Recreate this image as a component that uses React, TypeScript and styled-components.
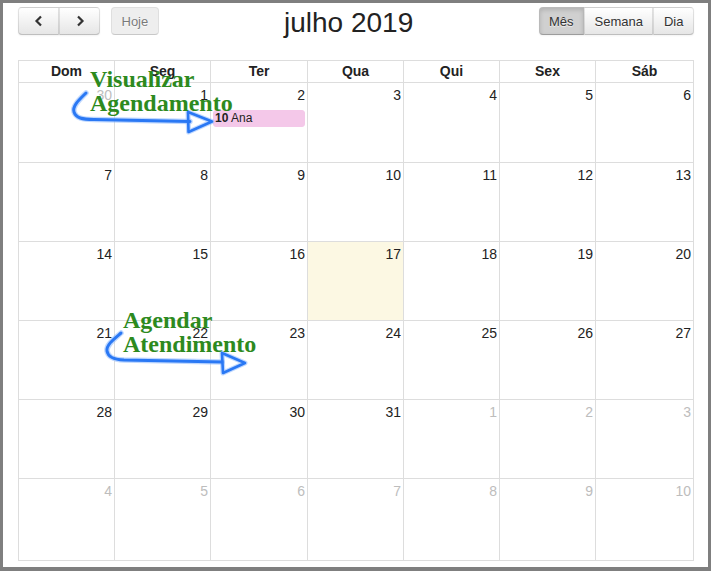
import React from "react";
import styled, { createGlobalStyle } from "styled-components";

const GlobalStyle = createGlobalStyle`
  html, body { margin: 0; padding: 0; background: #7f7f7f; }
  body { font-family: "Liberation Sans", Arial, sans-serif; color: #222; }
`;

const Page = styled.div`
  position: relative;
  padding: 3px 3px 4px 3px;
  width: 711px;
  height: 571px;
  box-sizing: border-box;
`;

const Frame = styled.div`
  width: 705px;
  height: 564px;
  box-sizing: border-box;
  background: #fff;
  padding: 4px 14px 0 15px;
`;

const Toolbar = styled.div`
  display: flex;
  align-items: flex-start;
  height: 53px;
`;

const Side = styled.div`
  display: flex;
  align-items: center;
  gap: 11px;
`;

const Center = styled.div`
  flex: 1;
  text-align: center;
`;

const Title = styled.h2`
  margin: 0;
  font-size: 28px;
  font-weight: normal;
  line-height: 32px;
  color: #222;
`;

const Group = styled.div`
  display: flex;
  & > * + * { margin-left: -1px; }
  & > *:not(:first-child) { border-top-left-radius: 0; border-bottom-left-radius: 0; }
  & > *:not(:last-child) { border-top-right-radius: 0; border-bottom-right-radius: 0; }
`;

const Button = styled.button<{ $active?: boolean; $w?: number }>`
  box-sizing: border-box;
  height: 28px;
  ${(p) => (p.$w ? `width: ${p.$w}px;` : "")}
  padding: 0 9.5px;
  margin: 0;
  display: flex;
  align-items: center;
  justify-content: center;
  font-family: "Liberation Sans", Arial, sans-serif;
  font-size: 13px;
  color: #333;
  border: 1px solid;
  border-color: rgba(0, 0, 0, 0.1) rgba(0, 0, 0, 0.1) rgba(0, 0, 0, 0.25);
  border-radius: 4px;
  text-shadow: 0 1px 1px rgba(255, 255, 255, 0.75);
  background-color: ${(p) => (p.$active ? "#d0d0d0" : "#f5f5f5")};
  background-image: ${(p) => (p.$active ? "none" : "linear-gradient(to bottom, #fff, #e6e6e6)")};
  box-shadow: ${(p) =>
    p.$active
      ? "inset 0 2px 4px rgba(0,0,0,.15), 0 1px 2px rgba(0,0,0,.05)"
      : "inset 0 1px 0 rgba(255,255,255,.2), 0 1px 2px rgba(0,0,0,.05)"};
  &:disabled {
    background-color: #e6e6e6;
    background-image: none;
    opacity: 0.65;
    box-shadow: none;
  }
`;

const columns = "96px 96px 97px 96px 96px 96px 98px";

const Table = styled.div`
  border-top: 1px solid #ddd;
  border-left: 1px solid #ddd;
`;

const HeadRow = styled.div`
  display: grid;
  grid-template-columns: ${columns};
`;

const HeadCell = styled.div`
  border-right: 1px solid #ddd;
  border-bottom: 1px solid #ddd;
  height: 21px;
  line-height: 21px;
  text-align: center;
  font-weight: bold;
  font-size: 14px;
  color: #222;
`;

const Body = styled.div`
  display: grid;
  grid-template-columns: ${columns};
  grid-template-rows: 80px 79px 79px 79px 79px 82px;
`;

const DayCell = styled.div<{ $today?: boolean }>`
  border-right: 1px solid #ddd;
  border-bottom: 1px solid #ddd;
  background: ${(p) => (p.$today ? "#fcf8e3" : "#fff")};
  padding: 2px 0;
  display: flex;
  flex-direction: column;
  min-width: 0;
`;

const DayNum = styled.div<{ $other?: boolean }>`
  text-align: right;
  padding-right: 2px;
  font-size: 14px;
  line-height: 20px;
  color: ${(p) => (p.$other ? "#bdbdbd" : "#222")};
`;

const Event = styled.div`
  margin: 5px 2px 0 2px;
  background: #f4c8e9;
  border: 1px solid #f4c8e9;
  border-radius: 3px;
  font-size: 12px;
  line-height: 15px;
  padding: 0 1px;
  color: #222;
  white-space: nowrap;
  overflow: hidden;
  b { font-weight: bold; }
`;

const Note = styled.div<{ $x: number; $y: number }>`
  position: absolute;
  left: ${(p) => p.$x}px;
  top: ${(p) => p.$y}px;
  font-family: "Liberation Serif", "Times New Roman", serif;
  font-weight: bold;
  font-size: 24px;
  line-height: 24px;
  color: #2d8a1e;
  white-space: nowrap;
  pointer-events: none;
`;

const Overlay = styled.svg`
  position: absolute;
  left: 0;
  top: 0;
  pointer-events: none;
`;

const Chevron = ({ dir }: { dir: "l" | "r" }) => (
  <svg width="10" height="12" viewBox="0 0 10 12">
    <path
      d={dir === "l" ? "M7 1.5 L2.5 6 L7 10.5" : "M3 1.5 L7.5 6 L3 10.5"}
      fill="none"
      stroke="#333"
      strokeWidth="2.2"
      strokeLinecap="butt"
      strokeLinejoin="miter"
    />
  </svg>
);

const days = ["Dom", "Seg", "Ter", "Qua", "Qui", "Sex", "Sáb"];

type Day = { n: number; other: boolean };
const cells: Day[] = [];
cells.push({ n: 30, other: true });
for (let i = 1; i <= 31; i++) cells.push({ n: i, other: false });
for (let i = 1; i <= 10; i++) cells.push({ n: i, other: true });

const Arrow = ({ shaft, head }: { shaft: string; head: string }) => (
  <g fill="none" strokeLinecap="round" strokeLinejoin="round">
    <path d={shaft} stroke="#8ab8ff" strokeWidth="5.5" opacity="0.55" />
    <path d={head} stroke="#8ab8ff" strokeWidth="5" opacity="0.55" />
    <path d={shaft} stroke="#2a78f4" strokeWidth="3" />
    <path d={head} stroke="#2a78f4" strokeWidth="2.6" />
  </g>
);

export default function App() {
  return (
    <>
      <GlobalStyle />
      <Page>
        <Frame>
          <Toolbar>
            <Side>
              <Group>
                <Button $w={41} aria-label="anterior">
                  <Chevron dir="l" />
                </Button>
                <Button $w={41} aria-label="próximo">
                  <Chevron dir="r" />
                </Button>
              </Group>
              <Button disabled>Hoje</Button>
            </Side>
            <Center>
              <Title>julho 2019</Title>
            </Center>
            <Side>
              <Group>
                <Button $active>Mês</Button>
                <Button>Semana</Button>
                <Button>Dia</Button>
              </Group>
            </Side>
          </Toolbar>
          <Table>
            <HeadRow>
              {days.map((d) => (
                <HeadCell key={d}>{d}</HeadCell>
              ))}
            </HeadRow>
            <Body>
              {cells.map((c, i) => (
                <DayCell key={i} $today={!c.other && c.n === 17}>
                  <DayNum $other={c.other}>{c.n}</DayNum>
                  {!c.other && c.n === 2 && (
                    <Event>
                      <b>10</b> Ana
                    </Event>
                  )}
                </DayCell>
              ))}
            </Body>
          </Table>
        </Frame>
        <Overlay width="711" height="571" viewBox="0 0 711 571">
          <Arrow
            shaft="M86 93 C 80 99, 72 106, 74 112 C 76 118, 82 119.5, 94 119.5 L 190 121.5"
            head="M188 112 L 212 121.5 L 188.5 132 Z"
          />
          <Arrow
            shaft="M121 333 C 114 339, 106 345, 107 351 C 108 357, 113 359.5, 124 360 L 222 362"
            head="M222 353 L 245 363 L 223 373 Z"
          />
        </Overlay>
        <Note $x={90} $y={67}>
          Visualizar
          <br />
          Agendamento
        </Note>
        <Note $x={123} $y={308}>
          Agendar
          <br />
          Atendimento
        </Note>
      </Page>
    </>
  );
}
